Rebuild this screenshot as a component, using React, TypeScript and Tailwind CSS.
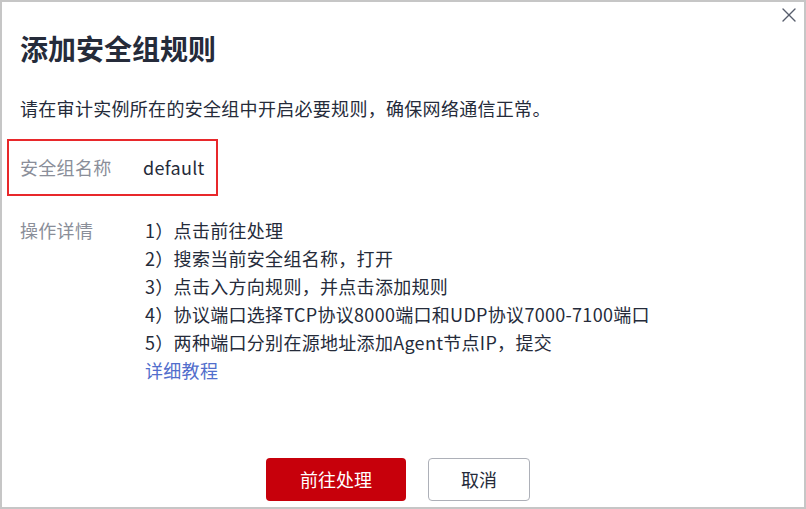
import { X } from 'lucide-react'

const steps = [
  '1）点击前往处理',
  '2）搜索当前安全组名称，打开',
  '3）点击入方向规则，并点击添加规则',
  '4）协议端口选择TCP协议8000端口和UDP协议7000-7100端口',
  '5）两种端口分别在源地址添加Agent节点IP，提交',
]

export default function App() {
  return (
    <div
      className="relative flex h-[509px] w-[806px] flex-col border-2 border-[#c6c6c6] bg-white pl-[18px] pt-[26px] pb-[6px] text-[#252b3a]"
      style={{ fontFamily: '"Noto Sans CJK SC", "Noto Sans", sans-serif' }}
    >
      <button className="absolute right-[3px] top-[1px] text-[#575d6c]">
        <X size={24} strokeWidth={1.4} />
      </button>

      <h1 className="text-[28px] font-bold leading-[40px]">添加安全组规则</h1>

      <p className="mt-[26px] text-[18px] leading-[28px] tracking-[0.3px]">
        请在审计实例所在的安全组中开启必要规则，确保网络通信正常。
      </p>

      <div className="ml-[-13px] mt-[17px] flex w-[211px] items-center border-2 border-[#e8282b] py-[12px] pl-[11px] text-[18px] leading-[29px] tracking-[0.3px]">
        <span className="w-[123px] shrink-0 text-[#8a8e99]">安全组名称</span>
        <span>default</span>
      </div>

      <div className="mt-[20px] flex text-[18px] leading-[28px] tracking-[0.3px]">
        <span className="w-[125px] shrink-0 text-[#8a8e99]">操作详情</span>
        <div className="flex flex-col">
          {steps.map((s) => (
            <span key={s}>{s}</span>
          ))}
          <a className="text-[#526ecc]">详细教程</a>
        </div>
      </div>

      <div className="mt-auto flex justify-center gap-[22px] pr-[28px]">
        <button className="h-[43px] w-[140px] rounded-[4px] bg-[#c7000b] text-[18px] text-white">
          前往处理
        </button>
        <button className="h-[43px] w-[102px] rounded-[4px] border border-[#adb0b8] bg-white text-[18px] text-[#252b3a]">
          取消
        </button>
      </div>
    </div>
  )
}
